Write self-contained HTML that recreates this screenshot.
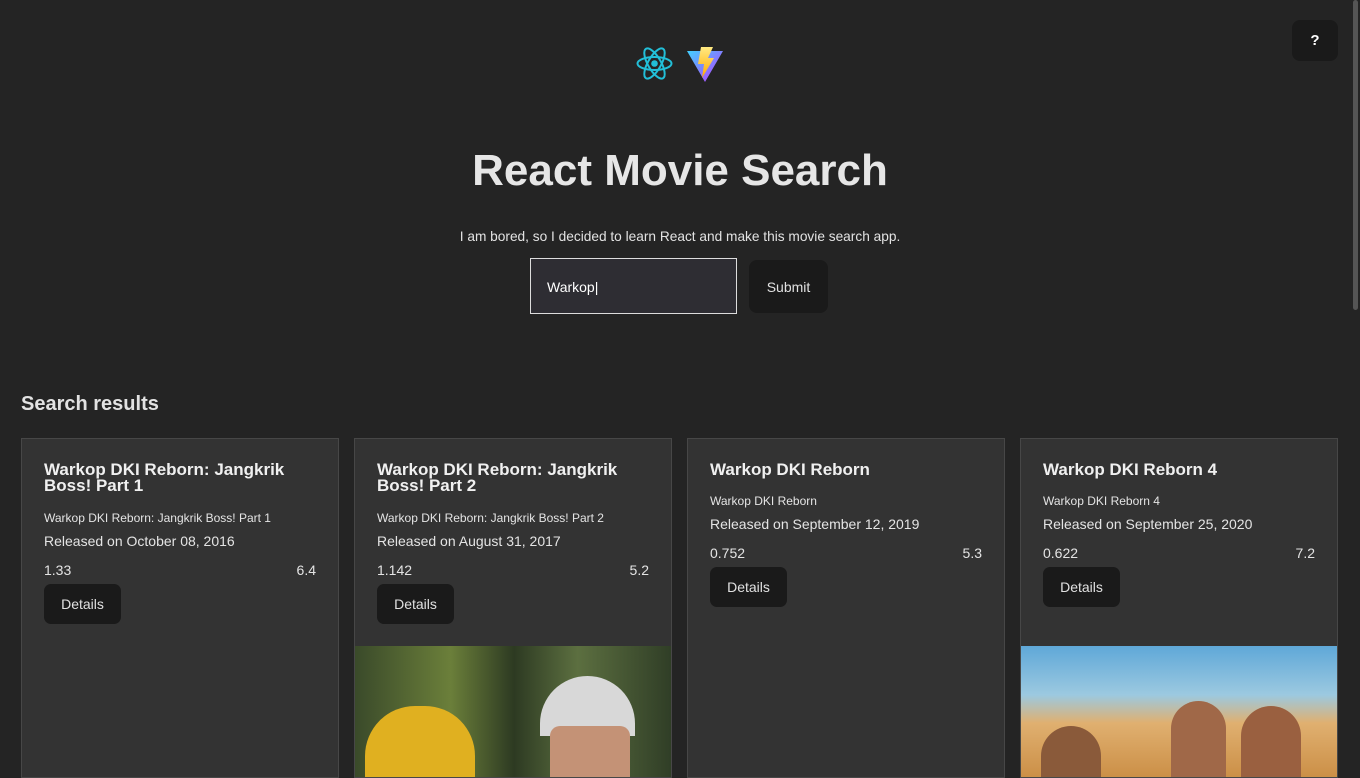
<!DOCTYPE html>
<html><head><style>
html,body{margin:0;padding:0;background:#242424;overflow:hidden;width:1360px;height:768px;font-family:"Liberation Sans",sans-serif;color:rgba(255,255,255,.87)}
.help{position:absolute;left:1292px;top:20px;width:46px;height:41px;background:#1a1a1a;border-radius:8px;color:#fff;font-weight:bold;font-size:15px;text-align:center;line-height:41px}
h1{position:absolute;left:0;width:1360px;top:146px;margin:0;text-align:center;font-size:44px;font-weight:bold;color:#e6e6e6}
.sub{position:absolute;left:0;width:1360px;top:229px;text-align:center;font-size:13.7px}
.inp{position:absolute;left:530px;top:258px;width:207px;height:56px;border:1px solid #ddd;background:#2e2d33;box-sizing:border-box;font-size:14px;line-height:56px;padding-left:16px;color:#fff}
.sbm{position:absolute;left:749px;top:260px;width:79px;height:53px;background:#1a1a1a;border-radius:8px;font-size:14px;text-align:center;line-height:54px}
h2{position:absolute;left:21px;top:393px;margin:0;font-size:20px;font-weight:bold}
.card{position:absolute;top:438px;width:318px;height:340px;background:#333;border:1px solid #474747;box-sizing:border-box;overflow:hidden}
.t{position:absolute;left:22px;top:23px;width:260px;font-size:17px;font-weight:bold;line-height:16px;color:#f0f0f0}
.s{position:absolute;left:22px;font-size:12px}
.r{position:absolute;left:22px;font-size:14px}
.st{position:absolute;left:22px;right:22px;font-size:14px;display:flex;justify-content:space-between}
.btn{position:absolute;left:22px;width:77px;height:40px;background:#1a1a1a;border-radius:7px;font-size:14px;text-align:center;line-height:41px}
.img{position:absolute;left:0;top:207px;width:318px;height:140px}
.sb{position:absolute;left:1353px;top:0;width:5px;height:310px;background:#555;border-radius:3px}
</style></head><body>
<div class="sb"></div>
<svg style="position:absolute;left:636px;top:45px" width="37" height="37" viewBox="-18.5 -18.5 37 37"><g fill="none" stroke="#22bfd8" stroke-width="2"><ellipse rx="17" ry="6.5"/><ellipse rx="17" ry="6.5" transform="rotate(60)"/><ellipse rx="17" ry="6.5" transform="rotate(120)"/></g><circle r="3.3" fill="#22bfd8"/></svg>
<svg style="position:absolute;left:686px;top:46px" width="38" height="37" viewBox="0 0 38 37"><defs><linearGradient id="a" x1="0" y1="0" x2="1" y2="1"><stop offset="0" stop-color="#41d1ff"/><stop offset="1" stop-color="#bd34fe"/></linearGradient><linearGradient id="b" x1="0" y1="0" x2="0" y2="1"><stop offset="0" stop-color="#ffea83"/><stop offset="1" stop-color="#ffa800"/></linearGradient></defs><path d="M1 5 L37 5 L19 36 Z" fill="url(#a)"/><path d="M15 1 L27 1 L22 12 L28 12 L16 32 L18 18 L12 18 Z" fill="url(#b)"/></svg>
<div class="help">?</div>
<h1>React Movie Search</h1>
<div class="sub">I am bored, so I decided to learn React and make this movie search app.</div>
<div class="inp">Warkop|</div>
<div class="sbm">Submit</div>
<h2>Search results</h2>

<div class="card" style="left:21px"><div class="t">Warkop DKI Reborn: Jangkrik Boss! Part 1</div><div class="s" style="top:72px">Warkop DKI Reborn: Jangkrik Boss! Part 1</div><div class="r" style="top:94px">Released on October 08, 2016</div><div class="st" style="top:123px"><span>1.33</span><span>6.4</span></div><div class="btn" style="top:145px">Details</div></div>

<div class="card" style="left:354px"><div class="t">Warkop DKI Reborn: Jangkrik Boss! Part 2</div><div class="s" style="top:72px">Warkop DKI Reborn: Jangkrik Boss! Part 2</div><div class="r" style="top:94px">Released on August 31, 2017</div><div class="st" style="top:123px"><span>1.142</span><span>5.2</span></div><div class="btn" style="top:145px">Details</div>
<div class="img" style="background:linear-gradient(90deg,#3a4a2a,#6b7f3a 30%,#2d3a22 50%,#5c6f40 70%,#2f3d26)"><div style="position:absolute;left:10px;top:60px;width:110px;height:80px;background:#e0b020;border-radius:50px 50px 0 0"></div><div style="position:absolute;left:185px;top:30px;width:95px;height:60px;background:#d8d8d8;border-radius:50px 50px 0 0"></div><div style="position:absolute;left:195px;top:80px;width:80px;height:60px;background:#c49276;border-radius:10px"></div></div></div>

<div class="card" style="left:687px"><div class="t">Warkop DKI Reborn</div><div class="s" style="top:55px">Warkop DKI Reborn</div><div class="r" style="top:77px">Released on September 12, 2019</div><div class="st" style="top:106px"><span>0.752</span><span>5.3</span></div><div class="btn" style="top:128px">Details</div></div>

<div class="card" style="left:1020px"><div class="t">Warkop DKI Reborn 4</div><div class="s" style="top:55px">Warkop DKI Reborn 4</div><div class="r" style="top:77px">Released on September 25, 2020</div><div class="st" style="top:106px"><span>0.622</span><span>7.2</span></div><div class="btn" style="top:128px">Details</div>
<div class="img" style="background:linear-gradient(180deg,#5fa8d8 0%,#9cc9e0 35%,#e0b070 55%,#c88a40 100%)"><div style="position:absolute;left:20px;top:80px;width:60px;height:60px;background:#8a5a3a;border-radius:30px 30px 0 0"></div><div style="position:absolute;left:150px;top:55px;width:55px;height:85px;background:#a06848;border-radius:28px 28px 0 0"></div><div style="position:absolute;left:220px;top:60px;width:60px;height:80px;background:#9a6040;border-radius:30px 30px 0 0"></div></div></div>
</body></html>
